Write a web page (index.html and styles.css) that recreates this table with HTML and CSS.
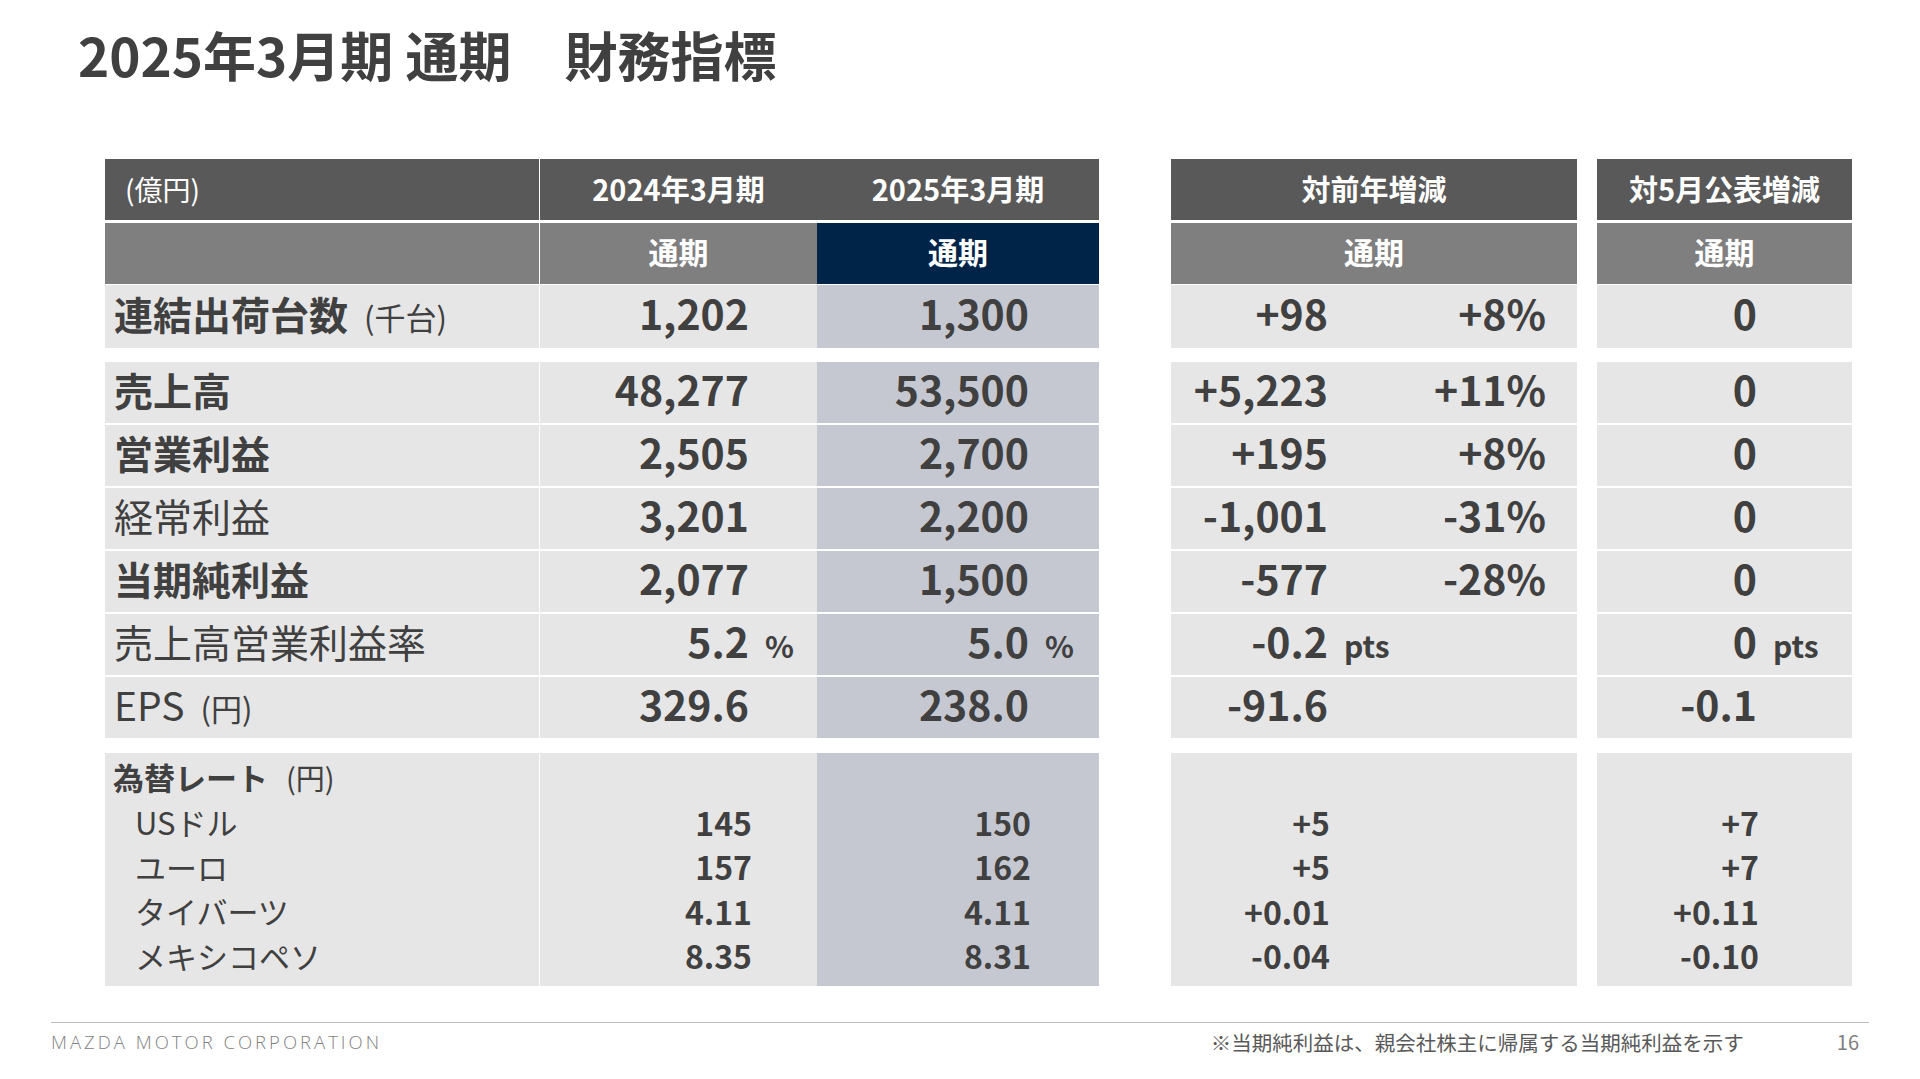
FILE: index.html
```html
<!DOCTYPE html>
<html lang="ja">
<head>
<meta charset="utf-8">
<title>2025年3月期 通期 財務指標</title>
<link rel="stylesheet" href="styles.css">
</head>
<body>
<div class="slide">
  <h1 class="title">2025年3月期 通期　財務指標</h1>

  <div class="tbl">
    <div class="row hd1">
      <div class="c dark hlabel">(億円)</div>
      <div class="c"></div>
      <div class="c dark hc">2024年3月期</div>
      <div class="c dark hc">2025年3月期</div>
      <div class="c"></div>
      <div class="c dark hc">対前年増減</div>
      <div class="c"></div>
      <div class="c dark hc">対5月公表増減</div>
    </div>
    <div class="row hd2">
      <div class="c gray"></div>
      <div class="c"></div>
      <div class="c gray hc">通期</div>
      <div class="c navy hc">通期</div>
      <div class="c"></div>
      <div class="c gray hc">通期</div>
      <div class="c"></div>
      <div class="c gray hc">通期</div>
    </div>

    <div class="row r0">
      <div class="c lt lbl"><span class="b">連結出荷台数</span><span class="sm">(千台)</span></div>
      <div class="c"></div>
      <div class="lt num n24"><span class="v">1,202</span></div>
      <div class="bl num n25"><span class="v">1,300</span></div>
      <div class="c"></div>
      <div class="lt yoy"><span class="v">+98</span><span class="p">+8%</span></div>
      <div class="c"></div>
      <div class="lt may"><span class="v">0</span></div>
    </div>

    <div class="row br first">
      <div class="c lt lbl"><span class="b">売上高</span></div>
      <div class="c"></div>
      <div class="lt num n24"><span class="v">48,277</span></div>
      <div class="bl num n25"><span class="v">53,500</span></div>
      <div class="c"></div>
      <div class="lt yoy"><span class="v">+5,223</span><span class="p">+11%</span></div>
      <div class="c"></div>
      <div class="lt may"><span class="v">0</span></div>
    </div>
    <div class="row br">
      <div class="c lt lbl"><span class="b">営業利益</span></div>
      <div class="c"></div>
      <div class="lt num n24"><span class="v">2,505</span></div>
      <div class="bl num n25"><span class="v">2,700</span></div>
      <div class="c"></div>
      <div class="lt yoy"><span class="v">+195</span><span class="p">+8%</span></div>
      <div class="c"></div>
      <div class="lt may"><span class="v">0</span></div>
    </div>
    <div class="row br">
      <div class="c lt lbl"><span>経常利益</span></div>
      <div class="c"></div>
      <div class="lt num n24"><span class="v">3,201</span></div>
      <div class="bl num n25"><span class="v">2,200</span></div>
      <div class="c"></div>
      <div class="lt yoy"><span class="v">-1,001</span><span class="p">-31%</span></div>
      <div class="c"></div>
      <div class="lt may"><span class="v">0</span></div>
    </div>
    <div class="row br">
      <div class="c lt lbl"><span class="b">当期純利益</span></div>
      <div class="c"></div>
      <div class="lt num n24"><span class="v">2,077</span></div>
      <div class="bl num n25"><span class="v">1,500</span></div>
      <div class="c"></div>
      <div class="lt yoy"><span class="v">-577</span><span class="p">-28%</span></div>
      <div class="c"></div>
      <div class="lt may"><span class="v">0</span></div>
    </div>
    <div class="row br">
      <div class="c lt lbl"><span>売上高営業利益率</span></div>
      <div class="c"></div>
      <div class="lt num n24"><span class="v">5.2</span><span class="u">%</span></div>
      <div class="bl num n25"><span class="v">5.0</span><span class="u">%</span></div>
      <div class="c"></div>
      <div class="lt yoy"><span class="v">-0.2</span><span class="pts">pts</span></div>
      <div class="c"></div>
      <div class="lt may"><span class="v">0</span><span class="pts">pts</span></div>
    </div>
    <div class="row br">
      <div class="c lt lbl"><span>EPS</span><span class="sm">(円)</span></div>
      <div class="c"></div>
      <div class="lt num n24"><span class="v">329.6</span></div>
      <div class="bl num n25"><span class="v">238.0</span></div>
      <div class="c"></div>
      <div class="lt yoy"><span class="v">-91.6</span></div>
      <div class="c"></div>
      <div class="lt may"><span class="v">-0.1</span></div>
    </div>

    <div class="row fx">
      <div class="lt fxcol fxlbl">
        <div class="ln head"><span class="b">為替レート</span><span class="sm2">(円)</span></div>
        <div class="ln sub">USドル</div>
        <div class="ln sub">ユーロ</div>
        <div class="ln sub">タイバーツ</div>
        <div class="ln sub">メキシコペソ</div>
      </div>
      <div class="c"></div>
      <div class="lt fxcol fxn f24">
        <div class="ln"></div>
        <div class="ln">145</div>
        <div class="ln">157</div>
        <div class="ln">4.11</div>
        <div class="ln">8.35</div>
      </div>
      <div class="bl fxcol fxn f25">
        <div class="ln"></div>
        <div class="ln">150</div>
        <div class="ln">162</div>
        <div class="ln">4.11</div>
        <div class="ln">8.31</div>
      </div>
      <div class="c"></div>
      <div class="lt fxcol fxn fyoy">
        <div class="ln"></div>
        <div class="ln">+5</div>
        <div class="ln">+5</div>
        <div class="ln">+0.01</div>
        <div class="ln">-0.04</div>
      </div>
      <div class="c"></div>
      <div class="lt fxcol fxn fmay">
        <div class="ln"></div>
        <div class="ln">+7</div>
        <div class="ln">+7</div>
        <div class="ln">+0.11</div>
        <div class="ln">-0.10</div>
      </div>
    </div>
  </div>

  <footer class="foot">
    <span class="corp">MAZDA MOTOR CORPORATION</span>
    <span class="note">※当期純利益は、親会社株主に帰属する当期純利益を示す</span>
    <span class="pg">16</span>
  </footer>
</div>
</body>
</html>
```

FILE: styles.css
```css
* {
  box-sizing: border-box;
  margin: 0;
  padding: 0;
}

body {
  margin: 0;
  background: #ffffff;
  font-family: "Noto Sans CJK JP", "Noto Sans", sans-serif;
  color: #404040;
}

.slide {
  width: 1920px;
  height: 1079px;
  padding-top: 27px;
  overflow: hidden;
}

.title {
  margin-left: 78px;
  font-size: 53px;
  line-height: 54px;
  font-weight: 700;
  color: #404040;
  white-space: pre;
}

.tbl {
  margin: 78px 0 0 105px;
  width: 1747px;
}

.row {
  display: grid;
  grid-template-columns: 434px 1px 277px 282px 72px 406px 20px 255px;
}

.hd1 { height: 61px; }
.hd2 { height: 61px; margin-top: 3px; }
.r0 { height: 63px; margin-top: 1px; }
.br { height: 61px; margin-top: 2px; }
.br.first { margin-top: 14px; }
.fx { height: 233px; margin-top: 15px; }

.c {
  display: flex;
  align-items: center;
}

.dark { background: #595959; color: #ffffff; }
.gray { background: #7f7f7f; color: #ffffff; }
.navy { background: #002448; color: #ffffff; }
.lt { background: #e6e6e6; }
.bl { background: #c6c8d1; }

.hc {
  justify-content: center;
  font-size: 29px;
  font-weight: 700;
  line-height: 1.2;
}

.hd1 .c {
  padding-bottom: 2px;
}

.hd2 .hc {
  font-size: 30px;
  padding-bottom: 6px;
}

.hlabel {
  padding-left: 20px;
  font-size: 28px;
  font-weight: 400;
}

.lbl {
  padding-left: 9px;
  padding-bottom: 7px;
  font-size: 39px;
  line-height: 1.2;
  align-items: baseline;
  align-content: center;
  flex-wrap: wrap;
}

.b { font-weight: 700; }

.sm {
  font-size: 31px;
  font-weight: 400;
  margin-left: 16px;
}

.num,
.yoy,
.may {
  display: grid;
  align-content: center;
  align-items: baseline;
  padding-bottom: 7px;
  font-size: 41px;
  font-weight: 700;
  line-height: 1.2;
}

.num .v,
.yoy .v,
.may .v {
  text-align: right;
}

.n24 { grid-template-columns: 1fr 68px; }
.n25 { grid-template-columns: 1fr 70px; }

.u {
  padding-left: 16px;
  font-size: 30px;
  font-weight: 700;
}

.yoy {
  grid-template-columns: 157px 1fr;
  padding-right: 31px;
}

.yoy .p {
  text-align: right;
}

.may {
  grid-template-columns: 1fr 95px;
}

.pts {
  padding-left: 16px;
  font-size: 30px;
  font-weight: 700;
}

.fxcol {
  padding-top: 2px;
}

.ln {
  height: 44.5px;
  display: flex;
  align-items: center;
  line-height: 1.2;
}

.fxlbl .head {
  padding-left: 8px;
  font-size: 31px;
  align-items: baseline;
  padding-top: 3px;
}

.sm2 {
  font-size: 29px;
  font-weight: 400;
  margin-left: 18px;
}

.fxlbl .sub {
  padding-left: 30px;
  font-size: 31px;
  font-weight: 400;
}

.fxn .ln {
  justify-content: flex-end;
  font-size: 32px;
  font-weight: 700;
}

.f24 { padding-right: 65px; }
.f25 { padding-right: 68px; }
.fyoy { padding-right: 247px; }
.fmay { padding-right: 93px; }

.foot {
  margin: 36px 0 0 51px;
  width: 1818px;
  border-top: 1px solid #bdbdbd;
  display: flex;
  align-items: center;
  padding-top: 9px;
  line-height: 20px;
}

.corp {
  font-family: "Open Sans", "Liberation Sans", sans-serif;
  font-weight: 300;
  font-size: 18.5px;
  letter-spacing: 3px;
  color: #7f7f7f;
}

.note {
  margin-left: auto;
  font-size: 20.5px;
  color: #595959;
}

.pg {
  margin-left: 93px;
  margin-right: 10px;
  font-size: 20px;
  color: #7f7f7f;
}
```
